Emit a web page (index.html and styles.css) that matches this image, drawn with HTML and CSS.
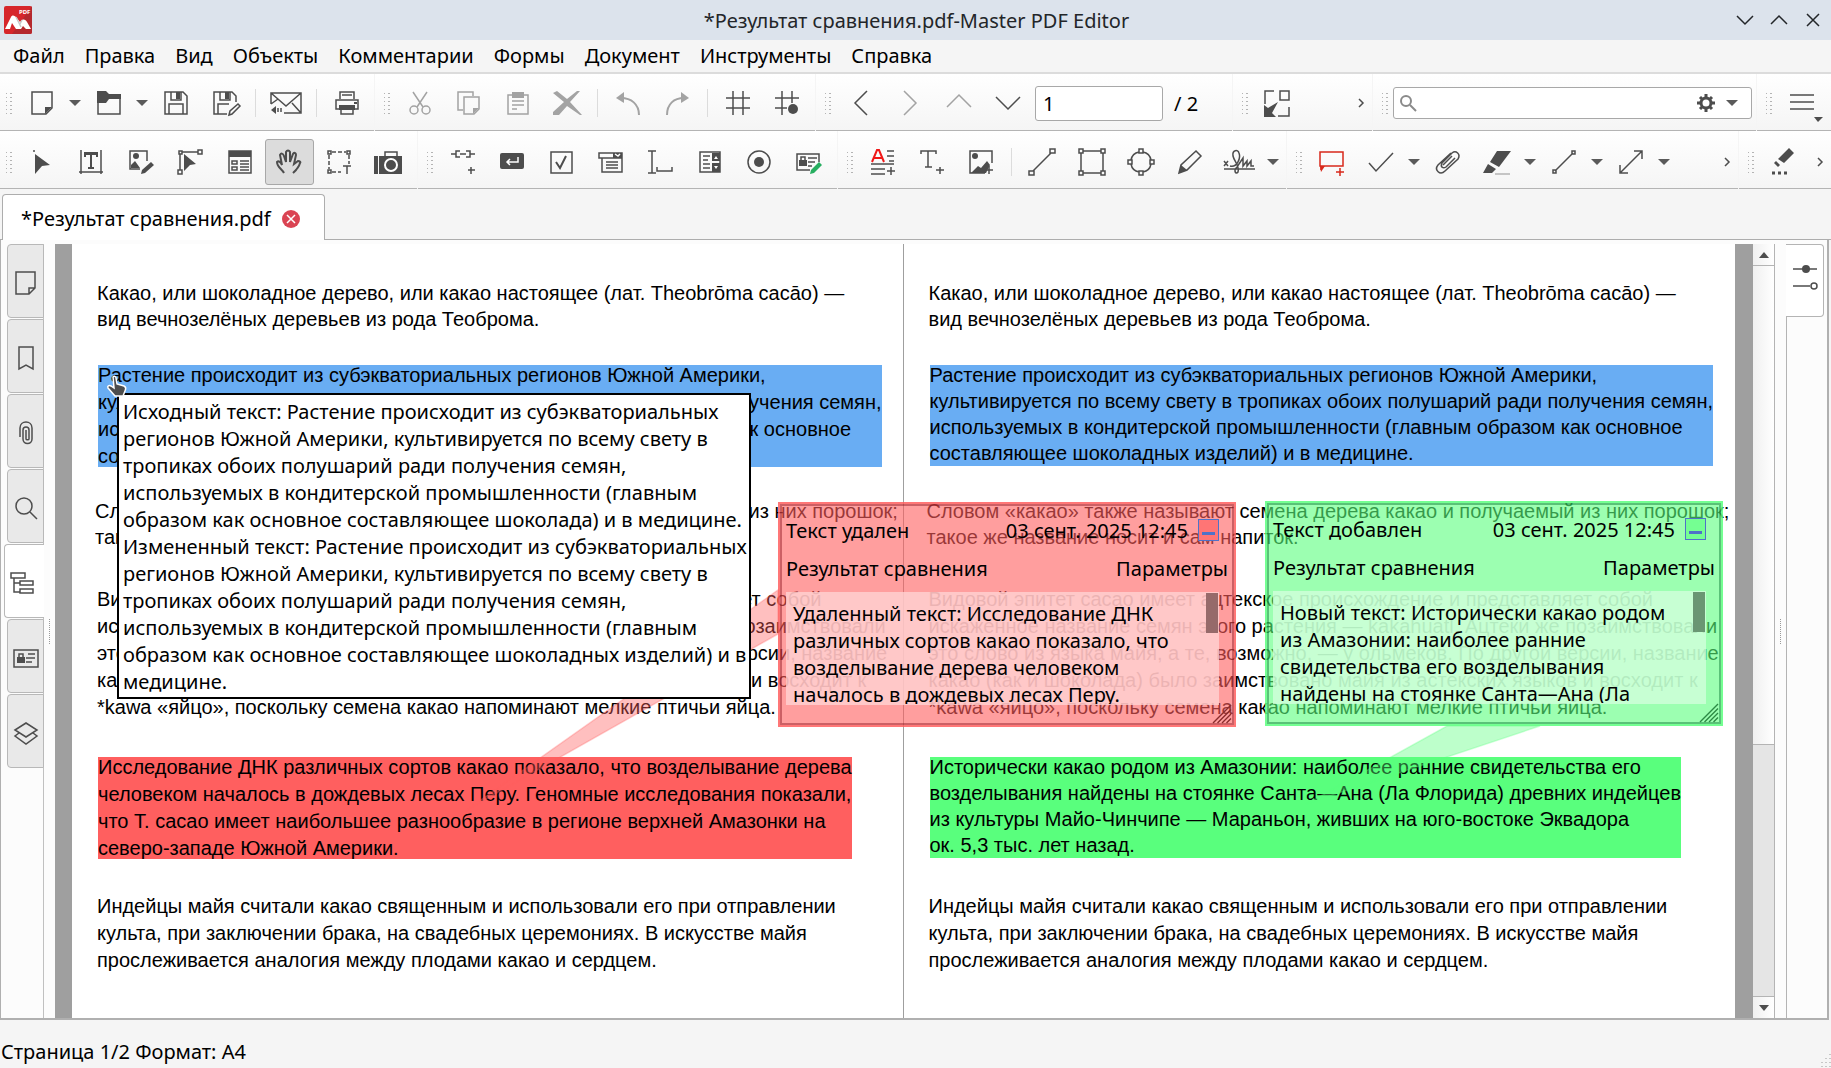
FILE: index.html
```html
<!DOCTYPE html>
<html lang="ru">
<head>
<meta charset="utf-8">
<title>*Результат сравнения.pdf-Master PDF Editor</title>
<link rel="stylesheet" href="styles.css">
</head>
<body>
<div class="app">
  <header class="titlebar">
    <svg class="logo" viewBox="0 0 28 28"><rect width="28" height="28" rx="2" fill="#d6262b"/><path d="M28 0v26a2 2 0 0 1-2 2H8z" fill="#b5282d"/><path d="M1 23L7 11c1-2 3-2 5 0l4 5 2-2c2-1 4 0 5 2l4 7h-5l-3-3-2 3h-5l-4-6-2 6z" fill="#fff"/><path d="M12 11l5 10M18 14l-2 4" stroke="#c9c9c9"/><text x="15" y="8" font-size="6" font-weight="bold" fill="#fff">PDF</text></svg>
    <h1 class="title">*Результат сравнения.pdf-Master PDF Editor</h1>
    <div class="window-buttons">
      <button aria-label="Свернуть"><svg viewBox="0 0 16 16"><path d="M0 4l8 8 8-8"/></svg></button>
      <button aria-label="Развернуть"><svg viewBox="0 0 16 16"><path d="M0 12l8-8 8 8"/></svg></button>
      <button aria-label="Закрыть"><svg viewBox="0 0 16 16"><path d="M2 2l12 12M14 2L2 14"/></svg></button>
    </div>
  </header>

  <nav class="menubar">
    <button>Файл</button><button>Правка</button><button>Вид</button><button>Объекты</button><button>Комментарии</button><button>Формы</button><button>Документ</button><button>Инструменты</button><button>Справка</button>
  </nav>

  <div class="toolbar">
    <div class="section section--first section--file">
      <i class="grip"></i>
      <button class="tool" aria-label="Создать"><svg viewBox="0 0 24 24"><path d="M2 1h20v16l-6 6H2z"/><path class="f" d="M15 16h7l-7 7z"/></svg></button>
      <button class="drop" aria-label="Варианты создания"></button>
      <button class="tool" aria-label="Открыть"><svg viewBox="0 0 24 24"><path d="M1 5v18h22V7"/><path class="f" d="M0 0h9l3 3h12v5H12l-3 4H0z"/></svg></button>
      <button class="drop" aria-label="Недавние файлы"></button>
      <button class="tool" aria-label="Сохранить"><svg viewBox="0 0 24 24"><path d="M1 1h18l4 4v18H1zM5 23V13h14v10M7 1v8h10V1"/><path class="f" d="M12 1h4v7h-4z"/></svg></button>
      <button class="tool" aria-label="Сохранить как"><svg viewBox="0 0 24 24"><path d="M14 23H1V1h18l4 4v6M5 23V13h11M7 1v8h10V1"/><path class="f" d="M12 1h4v7h-4z"/><path d="M16 24l1-4 8-7 2 2-8 8z"/></svg></button>
      <i class="sep"></i>
      <button class="tool" aria-label="Отправить"><svg viewBox="0 0 24 24"><path d="M-3 13V2h30v20H10M-3 2l15 13L27 2M27 22l-9-10M-3 13l7-5"/><path class="f" d="M-3 19l5-4v8z"/><path d="M4 17v4M7 17v4"/></svg></button>
      <i class="sep"></i>
      <button class="tool" aria-label="Печать"><svg viewBox="0 0 24 24"><path d="M5 8V1h14v7M7 4h10M1 9h22v9H1z"/><path class="f" d="M4 14h16v5H4zM19 11h3v2h-3z"/><path d="M6 19v4h12v-4"/></svg></button>
    </div>
    <div class="section section--edit">
      <i class="grip"></i>
      <button class="tool" disabled aria-label="Вырезать"><svg viewBox="0 0 24 24"><path d="M5 1l10 15M19 1L9 16"/><circle cx="6" cy="19" r="4"/><circle cx="18" cy="19" r="4"/></svg></button>
      <button class="tool" disabled aria-label="Копировать"><svg viewBox="0 0 24 24"><path d="M6 19H1V1h15v4"/><path d="M7 6h15v12l-5 5H7z"/><path class="f" d="M16 17h6l-6 6z"/></svg></button>
      <button class="tool" disabled aria-label="Вставить"><svg viewBox="0 0 24 24"><path d="M2 4h20v19H2zM6 10h12M6 14h12M6 18h5"/><path class="f" d="M6 1h12v6H6z"/></svg></button>
      <button class="tool" disabled aria-label="Удалить"><svg viewBox="0 0 24 24"><path class="f" d="M-2 2l4-2 10 8L22 0h3L15 11l12 13h-2L12 15 4 24h-6v-3L9 11z"/></svg></button>
      <i class="sep"></i>
      <button class="tool" disabled aria-label="Отменить"><svg viewBox="0 0 24 24"><path d="M5 7c10 0 18 6 18 17" stroke-width="2"/><path class="f" d="M0 7l8-6v11z"/></svg></button>
      <button class="tool" disabled aria-label="Повторить"><svg viewBox="0 0 24 24"><path d="M19 7C9 7 2 13 2 24" stroke-width="2"/><path class="f" d="M24 7l-8-6v11z"/></svg></button>
      <i class="sep"></i>
      <button class="tool" aria-label="Сетка"><svg viewBox="0 0 24 24"><path d="M7 0v24M17 0v24M0 7h24M0 17h24"/></svg></button>
      <button class="tool" aria-label="Привязка к сетке"><svg viewBox="0 0 24 24"><path d="M7 0v24M17 0v12M0 7h24M0 17h12"/><circle class="f" cx="18" cy="18" r="5"/></svg></button>
    </div>
    <div class="section section--nav">
      <i class="grip"></i>
      <button class="tool" aria-label="Назад"><svg viewBox="0 0 24 24"><path d="M18 0L6 12l12 12"/></svg></button>
      <button class="tool" disabled aria-label="Вперёд"><svg viewBox="0 0 24 24"><path d="M6 0l12 12L6 24"/></svg></button>
      <button class="tool" disabled aria-label="Предыдущая страница"><svg viewBox="0 0 24 24"><path d="M0 16L12 4l12 12"/></svg></button>
      <button class="tool" aria-label="Следующая страница"><svg viewBox="0 0 24 24"><path d="M0 6l12 12L24 6"/></svg></button>
      <input class="page-input" type="text" value="1" aria-label="Номер страницы">
      <span>/ 2</span>
    </div>
    <div class="section section--fit">
      <i class="grip"></i>
      <button class="tool" aria-label="Размер страницы"><svg viewBox="0 0 24 24"><path d="M8 0H-1v13M14 0h9v9h-9zM23 16v9H12"/><path class="f" d="M-2 14l4 3 10-6-6 11 4 4H-2z"/></svg></button>
      <button class="more" aria-label="Ещё"><svg viewBox="0 0 6 10"><path d="M1 1l4 4-4 4"/></svg></button>
    </div>
    <div class="section section--search">
      <i class="grip"></i>
      <div class="search">
        <svg class="lens" viewBox="0 0 16 16"><circle cx="6" cy="6" r="5"/><path d="M10 10l6 6"/></svg>
        <input type="search" aria-label="Поиск">
        <svg class="gear" viewBox="0 0 18 18"><circle cx="9" cy="9" r="5"/><path d="M9 0v4M9 14v4M0 9h4M14 9h4M3 3l3 3M12 12l3 3M15 3l-3 3M3 15l3-3"/></svg>
        <button class="drop" aria-label="Параметры поиска"></button>
      </div>
    </div>
    <div class="section section--menu">
      <i class="grip"></i>
      <button class="tool" aria-label="Меню"><svg viewBox="0 0 24 24"><path d="M0 4h24M0 11h24M0 18h24"/><path class="f" d="M24 26h9l-5 5z"/></svg></button>
    </div>
  </div>

  <div class="toolbar toolbar--tools">
    <div class="section section--first section--fill section--select">
      <i class="grip"></i>
      <button class="tool" aria-label="Выделение"><svg viewBox="0 0 24 24"><path class="f" d="M5 4l15 11-8 1-7 8z"/><circle class="f" cx="4" cy="1" r="1"/></svg></button>
      <button class="tool" aria-label="Правка текста"><svg viewBox="0 0 24 24"><path d="M2 0v24M22 0v24M0 22h24"/><path class="f" d="M5 2h14v5h-2V5h-4v12h2v2H9v-2h2V5H7v2H5z"/></svg></button>
      <button class="tool" aria-label="Правка изображений"><svg viewBox="0 0 24 24"><path d="M11 19H1V1h17v10"/><circle class="f" cx="7" cy="6" r="3"/><path class="f" d="M2 18v-3l4-4 5 7zM12 24l1-4 9-8 3 3-9 8z"/></svg></button>
      <button class="tool" aria-label="Правка контуров"><svg viewBox="0 0 24 24"><path d="M2 4v16M4 2h16"/><path d="M1 1h3v3H1zM20 0h4v4h-4zM0 20h4v4H0z"/><path class="f" d="M6 4l12 10-6 1-6 6z"/></svg></button>
      <button class="tool" aria-label="Правка форм"><svg viewBox="0 0 24 24"><path d="M1 1h22v22H1z"/><path class="f" d="M1 1h22v6H1z"/><path d="M4 11h5v3H4zM4 17h5v3H4zM12 11h9M12 14h9M12 17h9M12 20h9"/></svg></button>
      <button class="tool tool--active" aria-label="Рука"><svg viewBox="0 0 24 24"><path stroke-width="2" d="M7 23c-2-4-7-6-7-11 2-2 4 1 5 3L3 5c1-2 3-2 4 1l2 6V2c1-2 3-2 4 0v10l3-8c1-2 3-1 3 1l-2 9 4-3c2 0 3 1 2 2-1 4-2 4-4 7l-3 3"/></svg></button>
      <button class="tool" aria-label="Выделение текста"><svg viewBox="0 0 24 24"><path stroke-dasharray="4 2" d="M5 2h14M2 5v14M22 5v9M5 22h9"/><path d="M1 1h3v3H1zM20 1h3v3h-3zM1 20h3v3H1zM16 16h8M20 16v8"/></svg></button>
      <button class="tool" aria-label="Снимок"><svg viewBox="0 0 24 24"><path class="f" d="M-2 6h4v18h-4zM3 6h23v18H3z"/><circle cx="15" cy="15" r="6" stroke="#fff" stroke-width="2"/><path d="M9 6V2h12v4"/></svg></button>
    </div>
    <div class="section section--fill section--forms">
      <i class="grip"></i>
      <button class="tool" aria-label="Ссылка"><svg viewBox="0 0 24 24"><path d="M0 4h5M9 1H5v6h4M9 4h6M15 1h4v6h-4M19 4h5M20 17v7M17 20h7"/></svg></button>
      <button class="tool" aria-label="Кнопка"><svg viewBox="0 0 24 24"><rect class="f" y="3" width="24" height="16" rx="2"/><path d="M18 7v5H7M10 9l-3 3 3 3" stroke="#fff"/></svg></button>
      <button class="tool" aria-label="Флажок"><svg viewBox="0 0 24 24"><path d="M2 2h21v21H2z"/><path d="M7 12l4 6 6-12" stroke-width="2"/></svg></button>
      <button class="tool" aria-label="Список"><svg viewBox="0 0 24 24"><path d="M0 3h23v5H0zM3 8v14h20V8M7 12h12M7 15h12M7 18h12"/><path class="f" d="M14 3h9v5h-9z"/><path d="M16 4l3 2 2-2" stroke="#fff"/></svg></button>
      <button class="tool" aria-label="Текстовое поле"><svg viewBox="0 0 24 24"><path d="M0 1h8M4 1v22M0 23h8M9 17v4h15v-4"/></svg></button>
      <button class="tool" aria-label="Поле списка"><svg viewBox="0 0 24 24"><path d="M2 2h20v20H2zM5 6h7M5 10h5M5 14h7M5 18h7"/><path class="f" d="M14 3h8v8h-8zM14 13h8v9h-8z"/><path d="M16 9l2-3 2 3zM16 16l2 3 2-3z" fill="#fff" stroke="none"/></svg></button>
      <button class="tool" aria-label="Переключатель"><svg viewBox="0 0 24 24"><circle cx="12" cy="12" r="11"/><circle class="f" cx="12" cy="12" r="5"/></svg></button>
      <button class="tool" aria-label="Подпись"><svg viewBox="0 0 24 24"><path d="M14 20H1V4h22v8M12 8h9M12 12h7M12 16h4"/><path class="f" d="M3 10h8v6H3z"/><path d="M5 10V7h4v3"/><path d="M14 24l1-4 8-8 3 3-8 8z" fill="#27ae60" stroke="none"/></svg></button>
    </div>
    <div class="section section--fill section--insert">
      <i class="grip"></i>
      <button class="tool" aria-label="Правка документа"><svg viewBox="0 0 24 24"><path d="M1 12L6 0h2l5 12M3 8h8" stroke="#f01818" stroke-width="2"/><path d="M16 1h7M16 6h7M18 11h5M0 14h23M0 19h14M0 24h14M20 17v8M16 21h8"/></svg></button>
      <button class="tool" aria-label="Вставить текст"><svg viewBox="0 0 24 24"><path d="M1 4V1h15v3M8 1v16M5 17h7M20 17v7M16 20h8"/></svg></button>
      <button class="tool" aria-label="Вставить изображение"><svg viewBox="0 0 24 24"><path d="M16 23H1V1h22v12"/><circle class="f" cx="6" cy="6" r="3"/><path class="f" d="M2 23l7-7 3 2 6-7 3 4-4 8z"/><path d="M20 16v8M16 20h8"/></svg></button>
      <i class="sep"></i>
      <button class="tool" aria-label="Линия"><svg viewBox="0 0 24 24"><path d="M3 21L21 3M-1 21h5v4h-5zM20-1h5v4h-5z"/></svg></button>
      <button class="tool" aria-label="Прямоугольник"><svg viewBox="0 0 24 24"><path d="M1 3v18M23 3v18M3 1h18M3 23h18M-1-1h4v4h-4zM21-1h4v4h-4zM-1 21h4v4h-4zM21 21h4v4h-4z"/></svg></button>
      <button class="tool" aria-label="Эллипс"><svg viewBox="0 0 24 24"><path d="M14 2a10 10 0 0 1 8 8M22 14a10 10 0 0 1-8 8M10 22a10 10 0 0 1-8-8M2 10a10 10 0 0 1 8-8M10-1h4v4h-4zM10 21h4v4h-4zM-1 10h4v4h-4zM21 10h4v4h-4z"/></svg></button>
      <button class="tool" aria-label="Карандаш"><svg viewBox="0 0 24 24"><path d="M1 23l2-8L18 1l5 5L9 20z"/><path class="f" d="M1 23l2-8 6 5z"/></svg></button>
      <button class="tool" aria-label="Рукописная подпись"><svg viewBox="0 0 24 24"><path d="M-3 11l4 5M1 11l-4 5M-3 19h31M3 16C10 18 14 8 12 3 11-1 5 0 6 6c1 5 7 10 5 16-2 3-5-1-1-5l6-9v8l4-5v5l4-5v5h3"/></svg></button>
      <button class="drop" aria-label="Подписи"></button>
    </div>
    <div class="section section--comments">
      <i class="grip"></i>
      <button class="tool" aria-label="Заметка"><svg viewBox="0 0 24 24"><g stroke="#d8291b"><path d="M0 2h23v14H0zM1 16v4"/><path d="M20 18v8M16 22h8"/></g><path d="M0 16h5l-4 6z" fill="#d8291b" stroke="none"/></svg></button>
      <button class="tool" aria-label="Галочка"><svg viewBox="0 0 24 24"><path d="M0 13l7 8L24 3"/></svg></button>
      <button class="drop" aria-label="Отметки"></button>
      <button class="tool" aria-label="Прикрепить файл"><svg viewBox="0 0 24 24"><path d="M15 3L2 15c-4 5 2 11 7 6L22 9c3-5-2-9-6-6L6 13c-2 4 1 6 4 4l9-9M16 6l-9 9"/></svg></button>
      <button class="tool" aria-label="Маркер"><svg viewBox="0 0 24 24"><path class="f" d="M12 1h14L14 17 5 12zM3 14l8 5-4 4h-9z"/><path d="M10 24h15" stroke="#b5b5b5"/></svg></button>
      <button class="drop" aria-label="Маркеры"></button>
      <button class="tool" aria-label="Отрезок"><svg viewBox="0 0 24 24"><path d="M3 21L21 3M1 20h3v3H1zM20 1h3v3h-3z"/></svg></button>
      <button class="drop" aria-label="Фигуры"></button>
      <button class="tool" aria-label="Измерение"><svg viewBox="0 0 24 24"><path d="M1 23L23 1M15 1h8v8M1 15v8h8"/></svg></button>
      <button class="drop" aria-label="Измерения"></button>
      <button class="more" aria-label="Ещё"><svg viewBox="0 0 6 10"><path d="M1 1l4 4-4 4"/></svg></button>
    </div>
    <div class="section section--erase">
      <i class="grip"></i>
      <button class="tool" aria-label="Стирание"><svg viewBox="0 0 24 24"><path class="f" d="M17-2l5 5L12 13l-6-4zM4 11l4 4-2 2-4-4z"/><path d="M0 23h3M6 23h3M12 23h3" stroke-width="3"/></svg></button>
      <button class="more" aria-label="Ещё"><svg viewBox="0 0 6 10"><path d="M1 1l4 4-4 4"/></svg></button>
    </div>
  </div>

  <div class="tabs">
    <div class="tab">
      <span>*Результат сравнения.pdf</span>
      <button class="tab-close" aria-label="Закрыть вкладку"><svg viewBox="0 0 18 18"><circle cx="9" cy="9" r="9" fill="#da4453" stroke="none"/><path d="M5 5l8 8M13 5l-8 8" stroke="#fff"/></svg></button>
    </div>
  </div>

  <main class="workspace">
    <aside class="rail">
      <button aria-label="Страницы"><svg viewBox="0 0 24 24"><path d="M2 1h19v16l-6 6H2zM21 17h-6v6"/></svg></button>
      <button aria-label="Закладки"><svg viewBox="0 0 24 24"><path d="M5 1h14v22l-7-4-7 4z"/></svg></button>
      <button aria-label="Вложения"><svg viewBox="0 0 24 24"><path d="M6 16V7c0-8 12-8 12 0v11c0 6-9 6-9 0V9c0-4 6-4 6 0v9c0 1-3 1-3 0V9"/></svg></button>
      <button aria-label="Поиск"><svg viewBox="0 0 24 24"><circle cx="10" cy="10" r="8"/><path d="M16 16l7 7"/></svg></button>
      <button class="rail-active" aria-label="Объекты"><svg viewBox="0 0 24 24"><path d="M1 2h14v5H1zM4 7v14h6M4 12h6M10 10h13v4H10zM10 18h13v4H10z"/></svg></button>
      <button aria-label="Подписи"><svg viewBox="0 0 24 24"><path d="M0 4h24v17H0zM14 8h7M12 12h9M12 16h6"/><path class="f" d="M3 11h8v6H3z"/><path d="M5 11V8h4v3"/></svg></button>
      <button aria-label="Слои"><svg viewBox="0 0 24 24"><path d="M1 9l11-7 11 7-11 7zM5 12l-4 3 11 8 11-8-4-3"/></svg></button>
    </aside>
    <i class="splitter"></i>

    <section class="canvas">
      <article class="page">
        <p>Какао, или шоколадное дерево, или какао настоящее (лат. Theobrōma cacāo) —<br>вид вечнозелёных деревьев из рода Теоброма.</p>
        <p class="mark mark--blue loose">Растение происходит из субэкваториальных регионов Южной Америки,<br>культивируется по всему свету в тропиках обоих полушарий ради получения семян,<br>используемых в кондитерской промышленности (главным образом как основное<br>составляющее шоколада) и в медицине.</p>
        <p class="outdent">Словом «какао» также называют семена дерева какао и получаемый из них порошок;<br>такое же название носит и сам напиток.</p>
        <p class="loose">Видовой эпитет cacao имеет ацтекское происхождение и представляет собой<br>искажённое название семян этого растения — kakahuatl. Ацтеки же позаимствовали<br>это слово из языка майя, а те, возможно, — у ольмеков. По другой версии, название<br>какао (как и шоколада) было заимствовано майя из астекских языков и восходит к<br>*kawa «яйцо», поскольку семена какао напоминают мелкие птичьи яйца.</p>
        <p class="mark mark--red loose">Исследование ДНК различных сортов какао показало, что возделывание дерева<br>человеком началось в дождевых лесах Перу. Геномные исследования показали,<br>что T. cacao имеет наибольшее разнообразие в регионе верхней Амазонки на<br>северо-западе Южной Америки.</p>
        <p class="loose">Индейцы майя считали какао священным и использовали его при отправлении<br>культа, при заключении брака, на свадебных церемониях. В искусстве майя<br>прослеживается аналогия между плодами какао и сердцем.</p>
      </article>
      <article class="page">
        <p>Какао, или шоколадное дерево, или какао настоящее (лат. Theobrōma cacāo) —<br>вид вечнозелёных деревьев из рода Теоброма.</p>
        <p class="mark mark--blue">Растение происходит из субэкваториальных регионов Южной Америки,<br>культивируется по всему свету в тропиках обоих полушарий ради получения семян,<br>используемых в кондитерской промышленности (главным образом как основное<br>составляющее шоколадных изделий) и в медицине.</p>
        <p class="outdent">Словом «какао» также называют семена дерева какао и получаемый из них порошок;<br>такое же название носит и сам напиток.</p>
        <p class="loose">Видовой эпитет cacao имеет ацтекское происхождение и представляет собой<br>искажённое название семян этого растения — kakahuatl. Ацтеки же позаимствовали<br>это слово из языка майя, а те, возможно, — у ольмеков. По другой версии, название<br>какао (как и шоколада) было заимствовано майя из астекских языков и восходит к<br>*kawa «яйцо», поскольку семена какао напоминают мелкие птичьи яйца.</p>
        <p class="mark mark--green">Исторически какао родом из Амазонии: наиболее ранние свидетельства его<br>возделывания найдены на стоянке Санта—Ана (Ла Флорида) древних индейцев<br>из культуры Майо-Чинчипе — Мараньон, живших на юго-востоке Эквадора<br>ок. 5,3 тыс. лет назад.</p>
        <p class="loose">Индейцы майя считали какао священным и использовали его при отправлении<br>культа, при заключении брака, на свадебных церемониях. В искусстве майя<br>прослеживается аналогия между плодами какао и сердцем.</p>
      </article>

      <svg class="tails" width="1698" height="773" viewBox="0 0 1698 773">
        <path d="M723 346v44L410 567z" fill="#ff5f5f" fill-opacity=".4" stroke="#ff5f5f" stroke-opacity=".3"/>
        <path d="M1392 482h93L1251 560z" fill="#5aff7d" fill-opacity=".4" stroke="#5aff7d" stroke-opacity=".3"/>
      </svg>

      <div class="note note--red">
        <div class="note-row"><span>Текст удален</span><time>03 сент. 2025 12:45</time><button class="note-min" aria-label="Свернуть заметку"></button></div>
        <div class="note-row note-row--author"><span>Результат сравнения</span><button class="note-options">Параметры</button></div>
        <div class="note-body"><textarea aria-label="Текст удален">Удаленный текст: Исследование ДНК различных сортов какао показало, что возделывание дерева человеком началось в дождевых лесах Перу.</textarea><i class="note-thumb"></i></div>
        <svg class="note-grip" viewBox="0 0 20 20"><path d="M0 20L20 0M5 20L20 5M10 20l10-10M15 20l5-5"/></svg>
      </div>
      <div class="note note--green">
        <div class="note-row"><span>Текст добавлен</span><time>03 сент. 2025 12:45</time><button class="note-min" aria-label="Свернуть заметку"></button></div>
        <div class="note-row note-row--author"><span>Результат сравнения</span><button class="note-options">Параметры</button></div>
        <div class="note-body"><textarea aria-label="Текст добавлен">Новый текст: Исторически какао родом из Амазонии: наиболее ранние свидетельства его возделывания найдены на стоянке Санта—Ана (Ла</textarea><i class="note-thumb"></i></div>
        <svg class="note-grip" viewBox="0 0 20 20"><path d="M0 20L20 0M5 20L20 5M10 20l10-10M15 20l5-5"/></svg>
      </div>

      <div class="tooltip" role="tooltip">Исходный текст: Растение происходит из субэкваториальных<br>регионов Южной Америки, культивируется по всему свету в<br>тропиках обоих полушарий ради получения семян,<br>используемых в кондитерской промышленности (главным<br>образом как основное составляющее шоколада) и в медицине.<br>Измененный текст: Растение происходит из субэкваториальных<br>регионов Южной Америки, культивируется по всему свету в<br>тропиках обоих полушарий ради получения семян,<br>используемых в кондитерской промышленности (главным<br>образом как основное составляющее шоколадных изделий) и в<br>медицине.</div>
      <svg class="cursor" viewBox="0 0 20 22"><path d="M7 2c1-1 3-1 3 1l1 6 7 2c2 1 2 3 1 5l-2 5H9l-7-8c-1-2 1-3 3-2l3 2z" fill="#4d4d4d" stroke="#fff"/></svg>
    </section>

    <div class="scrollbar">
      <button aria-label="Вверх"><svg viewBox="0 0 10 6"><path d="M0 6l5-6 5 6z"/></svg></button>
      <i class="scroll-track"></i>
      <i class="scroll-thumb"></i>
      <button aria-label="Вниз"><svg viewBox="0 0 10 6"><path d="M0 0l5 6 5-6z"/></svg></button>
    </div>
    <i class="splitter splitter--right"></i>
    <aside class="props">
      <button aria-label="Свойства"><svg viewBox="0 0 24 24"><path d="M0 3h24M0 20h17"/><circle class="f" cx="13" cy="3" r="4"/><circle cx="21" cy="20" r="3"/></svg></button>
    </aside>
  </main>

  <footer class="status">Страница 1/2 Формат: A4<svg viewBox="0 0 12 16"><path stroke-dasharray="1 3" d="M11 1v15M7 5v11M3 9v7"/></svg></footer>
</div>
</body>
</html>
```

FILE: styles.css
```css
* { box-sizing: border-box; }

body {
  margin: 0;
  font: 20px/27px "Noto Sans", sans-serif;
  color: #000;
  background: #f5f5f5;
}

button, input, textarea {
  margin: 0;
  padding: 0;
  border: 0;
  font: inherit;
  color: inherit;
  background: none;
}

svg {
  fill: none;
  stroke: #4d4d4d;
  stroke-width: 1.5;
  overflow: visible;
}

.f { fill: #4d4d4d; stroke: none; }

.app {
  display: flex;
  flex-direction: column;
  min-height: 100vh;
}

/* Title bar */
.titlebar {
  display: flex;
  align-items: center;
  height: 40px;
  padding: 0 10px 0 4px;
  background: #dce3ec;
}

.logo { width: 28px; height: 28px; stroke: none; }

.title {
  flex: 1;
  margin: 0;
  padding-left: 64px;
  font-size: 20px;
  font-weight: 400;
  text-align: center;
  color: #232629;
}

.window-buttons { display: flex; gap: 18px; }
.window-buttons button { display: flex; width: 16px; }
.window-buttons svg { width: 16px; height: 16px; stroke: #232629; }

/* Menu */
.menubar {
  display: flex;
  gap: 1px;
  height: 34px;
  border-bottom: 2px solid #dcdcdc;
}

.menubar button { padding: 0 6px 1px 13px; }

/* Toolbars */
.toolbar {
  display: flex;
  gap: 1px;
  height: 57px;
}

.section {
  display: flex;
  flex: none;
  align-items: center;
  min-width: 0;
  padding-top: 2px;
  border-bottom: 1px solid #b4b4b4;
  background: linear-gradient(#fff, #f5f5f5);
}

.toolbar--tools { height: 58px; }
.toolbar--tools .section { padding-top: 4px; }

.section--file { width: 374px; }
.section--edit { width: 440px; }
.section--nav { width: 416px; }
.section--fit { width: 139px; }
.section--search { flex: 1; padding-right: 4px; }
.section--menu { width: 74px; }
.section--select { width: 417px; padding-right: 4px; }
.section--forms { width: 419px; padding-right: 4px; }
.section--insert { width: 448px; padding-right: 4px; }
.section--comments { flex: 1; }
.section--erase { width: 92px; }
.section--fill .tool { flex-grow: 1; }

.grip {
  flex: none;
  width: 6px;
  height: 24px;
  margin: 0 5px 0 9px;
  background:
    linear-gradient(#b4b4b4 1px, transparent 1px) left / 1px 4px repeat-y,
    linear-gradient(#b4b4b4 1px, transparent 1px) right / 2px 4px repeat-y;
}

.section--first .grip { margin-left: 6px; }

.tool {
  display: flex;
  flex: 0 0 49px;
  align-items: center;
  justify-content: center;
  height: 46px;
}

.tool svg { width: 24px; height: 24px; }

.tool--active {
  border: 1px solid #a8a8a8;
  border-radius: 3px;
  background: #dcdcdc;
}

.tool:disabled svg { stroke: #a3a3a3; }
.tool:disabled .f { fill: #a3a3a3; stroke: none; }

.drop {
  display: flex;
  flex: 0 0 18px;
  justify-content: center;
}

.drop::before {
  content: "";
  border: solid transparent;
  border-width: 6px 6px 0;
  border-top-color: #5a5a5a;
}

.sep {
  flex: 0 0 12px;
  height: 28px;
  background: linear-gradient(#dcdcdc, #dcdcdc) center / 1px 100% no-repeat;
}

.more {
  display: flex;
  margin: 0 8px 0 auto;
}

.more svg { width: 6px; height: 10px; }

.page-input {
  width: 128px;
  height: 35px;
  margin: 0 11px 0 3px;
  padding-left: 7px;
  border: 1px solid #a8a8a8;
  border-radius: 3px;
  background: #fff;
}

.search {
  display: flex;
  flex: 1;
  align-items: center;
  min-width: 0;
  height: 32px;
  padding: 0 10px 0 6px;
  border: 1px solid #a8a8a8;
  border-radius: 3px;
  background: #fff;
}

.search input {
  flex: 1;
  width: 0;
  min-width: 0;
  outline: 0;
}

.lens { width: 16px; height: 16px; stroke: #8a8a8a; stroke-width: 2; }
.gear { width: 18px; height: 18px; margin-right: 8px; stroke-width: 3; }

/* Document tabs */
.tabs {
  display: flex;
  height: 51px;
  padding: 5px 0 0 2px;
  background: linear-gradient(#adadad, #adadad) bottom / 100% 1px no-repeat;
}

.tab {
  display: flex;
  align-items: center;
  gap: 11px;
  padding: 2px 24px 0 18px;
  border: 1px solid #adadad;
  border-bottom: 0;
  border-radius: 4px 4px 0 0;
  background: #fff;
}

.tab-close { display: flex; }
.tab-close svg { width: 18px; height: 18px; }

/* Work area */
.workspace {
  display: flex;
  flex: 1;
  margin-right: 2px;
  padding-top: 4px;
  border: solid #b0b0b0;
  border-width: 0 2px 2px 1px;
  background: #fcfcfc;
}

.rail {
  display: flex;
  flex: none;
  flex-direction: column;
  gap: 1px;
  width: 43px;
  padding-left: 6px;
  background: linear-gradient(#c0c0c0, #c0c0c0) right / 1px 100% no-repeat;
}

.rail button {
  display: flex;
  align-items: center;
  justify-content: center;
  height: 74px;
  padding-top: 3px;
  border: 1px solid #b8b8b8;
  border-radius: 4px 0 0 4px;
  background: #e9e9e9;
}

.rail .rail-active {
  margin-left: -3px;
  padding-right: 6px;
  border-right: 0;
  background: #fff;
}

.rail svg { width: 24px; height: 24px; }

.splitter {
  flex: none;
  align-self: center;
  width: 2px;
  height: 25px;
  margin: 0 4px 0 5px;
  border-left: 1px dotted #999;
}

.canvas {
  position: relative;
  display: grid;
  grid-template-columns: 1fr 1fr;
  flex: 1;
  min-width: 0;
  padding: 0 18px 0 17px;
  background: #9f9f9f;
}

.page {
  display: grid;
  grid-template-rows: 82px 136px 88px 168px 139px auto;
  align-items: start;
  min-width: 0;
  padding: 36px 0 44px 25px;
  font: 20px/26px "Liberation Sans", sans-serif;
  white-space: nowrap;
  background: #fff;
}

.page:first-child { border-right: 1px solid #9f9f9f; }
.page p { margin: 0; }
.page .outdent { margin-left: -2px; }
.page .loose { line-height: 27px; }

.mark {
  --mark-height: 100%;
  justify-self: start;
}

.page .mark { margin-left: 1px; }
.mark.loose { --mark-height: calc(100% - 6px); }
.mark--blue { background: linear-gradient(#69adf3, #69adf3) 0 3px / 100% var(--mark-height) no-repeat; }
.mark--red { background: linear-gradient(#ff5f5f, #ff5f5f) 0 3px / 100% var(--mark-height) no-repeat; }
.mark--green { background: linear-gradient(#59ff7d, #59ff7d) 0 3px / 100% var(--mark-height) no-repeat; }

.tails {
  position: absolute;
  top: 0;
  left: 0;
}

/* Pop-up notes pinned on the page */
.note {
  position: absolute;
  width: 458px;
  padding: 14px 6px 20px;
  border: 2px solid var(--edge);
  background: var(--paper);
  box-shadow: inset 0 0 0 2px var(--line);
}

.note--red {
  --paper: rgba(255, 94, 94, .6);
  --edge: rgba(255, 94, 94, .6);
  --line: rgba(140, 20, 30, .45);
  --field: rgba(255, 210, 210, .8);
  --button: #ff7575;
  --thumb: #966a6a;
  --grip: #8a2c2c;
  top: 258px;
  left: 723px;
}

.note--green {
  --paper: rgba(90, 255, 125, .6);
  --edge: rgba(90, 255, 125, .6);
  --line: rgba(10, 120, 50, .45);
  --field: rgba(210, 255, 220, .8);
  --button: #75ff92;
  --thumb: #6a9673;
  --grip: #2c8a44;
  top: 257px;
  left: 1210px;
}

.note-row {
  display: flex;
  align-items: center;
  gap: 10px;
  height: 24px;
}

.note-row time { margin-left: auto; }
.note-row--author { margin-top: 14px; }
.note-options { margin-left: auto; }

.note-min {
  display: flex;
  align-items: end;
  justify-content: center;
  width: 21px;
  height: 22px;
  margin-right: 9px;
  padding-bottom: 5px;
  border: 1px solid #4f72c8;
  background: var(--button);
}

.note-min::before {
  content: "";
  width: 13px;
  height: 3px;
  background: #4f72c8;
}

.note-body {
  display: flex;
  height: 113px;
  margin: 12px 9px 0 0;
  padding: 1px;
  background: var(--field);
}

.note-body textarea {
  flex: 1;
  height: 111px;
  padding: 7px 20px 0 6px;
  overflow: hidden;
  resize: none;
  outline: 0;
}

.note-thumb {
  width: 12px;
  height: 40px;
  background: var(--thumb);
}

.note-grip {
  position: absolute;
  right: 2px;
  bottom: 2px;
  width: 20px;
  height: 18px;
  stroke: var(--grip);
}

.tooltip {
  position: absolute;
  top: 149px;
  left: 62px;
  padding: 3px 2px 2px 4px;
  border: 2px solid #000;
  white-space: nowrap;
  background: #fff;
}

.cursor {
  position: absolute;
  top: 131px;
  left: 51px;
  width: 20px;
  height: 22px;
}

/* Scroll bar */
.scrollbar {
  display: flex;
  flex: none;
  flex-direction: column;
  width: 22px;
  border-right: 1px solid #b4b4b4;
  background: linear-gradient(90deg, #f0f0f0, #fff);
}

.scrollbar button {
  display: flex;
  align-items: center;
  justify-content: center;
  height: 21px;
}

.scrollbar svg { width: 10px; height: 6px; fill: #4d4d4d; stroke: none; }
.scroll-track { flex: 479; border-top: 1px solid #b4b4b4; }
.scroll-thumb { flex: 252; border: solid #b4b4b4; border-width: 1px 0; background: #e5e5e5; }

/* Right panel */
.props {
  flex: none;
  width: 41px;
  padding-right: 3px;
  background: linear-gradient(#b4b4b4, #b4b4b4) left / 1px 100% no-repeat;
}

.props button {
  display: flex;
  align-items: center;
  justify-content: center;
  width: 100%;
  height: 73px;
  padding-bottom: 6px;
  border: 1px solid #b4b4b4;
  border-left: 0;
  border-radius: 0 4px 4px 0;
  background: #fff;
}

.props svg { width: 24px; height: 24px; }

/* Status bar */
.status {
  display: flex;
  align-items: center;
  justify-content: space-between;
  height: 49px;
  padding: 13px 0 0 1px;
}

.status svg { align-self: end; width: 12px; height: 16px; stroke: #999; stroke-width: 1; }
```
